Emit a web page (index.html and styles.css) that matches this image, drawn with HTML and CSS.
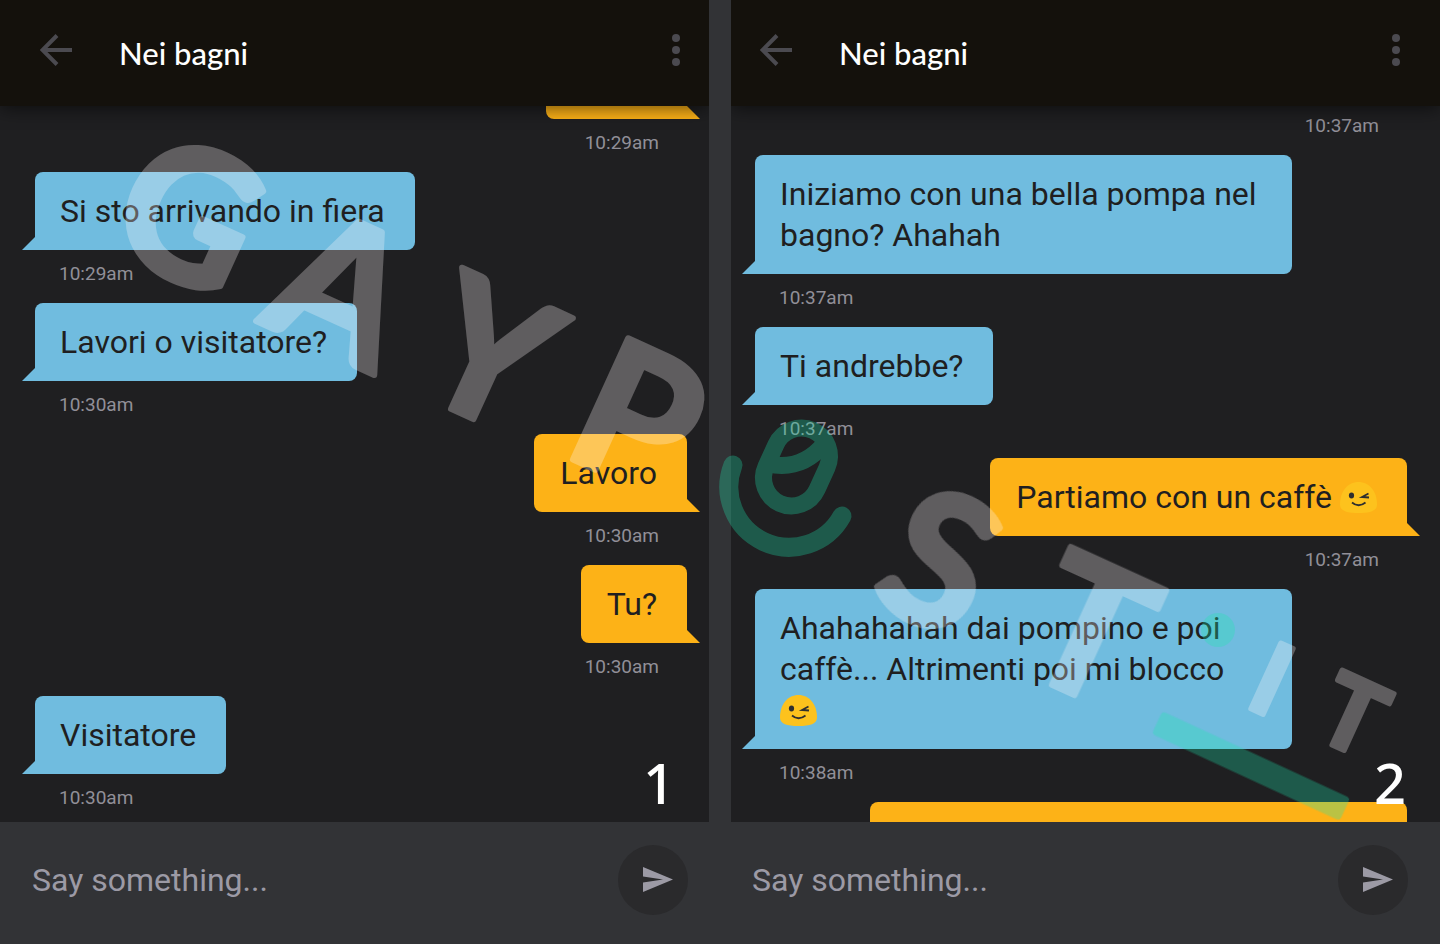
FILE: index.html
```html
<!DOCTYPE html>
<html lang="it">
<head>
<meta charset="utf-8">
<meta name="viewport" content="width=device-width, initial-scale=1">
<title>Nei bagni</title>
<link rel="stylesheet" href="styles.css">
</head>
<body>
<svg class="sprite" aria-hidden="true">
  <symbol id="back" viewBox="0 0 32 38"><path d="M32 16H4M17 1.500L2.500 16L17 30.500" fill="none" stroke="#4b4a50" stroke-width="4"/></symbol>
  <symbol id="more" viewBox="0 0 8 38"><g fill="#4b4a50"><circle cx="4" cy="4" r="4"/><circle cx="4" cy="16" r="4"/><circle cx="4" cy="28" r="4"/></g></symbol>
  <symbol id="send" viewBox="0 0 70 70"><path d="M25 22L55 34.500L25 47V37.500L45 34.500L25 31.500Z" fill="#9c9aa5"/></symbol>
  <symbol id="wink" viewBox="0 0 37 31">
    <path d="M18.500 0C8 0 0 9 0 22.500C0 29 7 31 18.500 31S37 29 37 22.500C37 9 29 0 18.500 0Z" fill="#fdc21d"/>
    <ellipse cx="11.500" cy="13.500" rx="2.600" ry="3" fill="#2f2f2f"/>
    <path d="M28.500 11.500L22 15L29 15.500M12 20.500Q18.500 26 25.500 20.500" fill="none" stroke="#2f2f2f" stroke-width="1.800"/>
  </symbol>
</svg>

<main class="screens">
  <section class="screen screen--first">
    <header class="bar">
      <button class="icon-button" aria-label="Back"><svg width="32" height="38"><use href="#back"/></svg></button>
      <h1 class="title">Nei bagni</h1>
      <button class="icon-button" aria-label="More"><svg width="8" height="38"><use href="#more"/></svg></button>
    </header>
    <ol class="thread">
      <li class="message message--out"><div class="bubble bubble--top-cut"></div><time class="time">10:29am</time></li>
      <li class="message"><p class="bubble">Si sto arrivando in fiera</p><time class="time">10:29am</time></li>
      <li class="message"><p class="bubble">Lavori o visitatore?</p><time class="time">10:30am</time></li>
      <li class="message message--out"><p class="bubble">Lavoro</p><time class="time">10:30am</time></li>
      <li class="message message--out"><p class="bubble">Tu?</p><time class="time">10:30am</time></li>
      <li class="message"><p class="bubble">Visitatore</p><time class="time">10:30am</time></li>
    </ol>
    <form class="composer">
      <input class="field" type="text" aria-label="Message" placeholder="Say something...">
      <button class="send" type="button" aria-label="Send"><svg width="70" height="70"><use href="#send"/></svg></button>
    </form>
    <span class="number">1</span>
  </section>

  <section class="screen screen--second">
    <header class="bar">
      <button class="icon-button" aria-label="Back"><svg width="32" height="38"><use href="#back"/></svg></button>
      <h1 class="title">Nei bagni</h1>
      <button class="icon-button" aria-label="More"><svg width="8" height="38"><use href="#more"/></svg></button>
    </header>
    <ol class="thread thread--scrolled">
      <li class="message message--out"><time class="time">10:37am</time></li>
      <li class="message"><p class="bubble">Iniziamo con una bella pompa nel bagno? Ahahah</p><time class="time">10:37am</time></li>
      <li class="message"><p class="bubble">Ti andrebbe?</p><time class="time">10:37am</time></li>
      <li class="message message--out"><p class="bubble">Partiamo con un caffè <svg class="emoji" role="img" aria-label="wink"><use href="#wink"/></svg></p><time class="time">10:37am</time></li>
      <li class="message"><p class="bubble">Ahahahahah dai pompino e poi caffè... Altrimenti poi mi blocco <svg class="emoji" role="img" aria-label="wink"><use href="#wink"/></svg></p><time class="time">10:38am</time></li>
      <li class="message message--out"><div class="bubble bubble--bottom-cut"></div></li>
    </ol>
    <form class="composer">
      <input class="field" type="text" aria-label="Message" placeholder="Say something...">
      <button class="send" type="button" aria-label="Send"><svg width="70" height="70"><use href="#send"/></svg></button>
    </form>
    <span class="number">2</span>
  </section>
</main>

<svg class="watermark" viewBox="0 0 1440 944" aria-hidden="true">
  <g class="letters">
    <text transform="translate(190 213) rotate(24.500)" y="67">G</text>
    <text transform="translate(343 287) rotate(24.500)" y="67">A</text>
    <text transform="translate(490 353) rotate(24.500)" y="67">Y</text>
    <text transform="translate(639 416) rotate(24.500)" y="67">P</text>
    <text transform="translate(940 560) rotate(24.500)" y="67">S</text>
    <text transform="translate(1091 629) rotate(24.500)" y="67">T</text>
    <g class="letters--small">
      <text transform="translate(1272 679) rotate(24.500)" y="36">I</text>
      <text transform="translate(1353 715) rotate(24.500)" y="36">T</text>
    </g>
  </g>
  <g opacity="0.300">
    <g fill="none" stroke="#1fe7b0" stroke-linecap="round">
      <path d="M733 465A60.300 60.300 0 0 0 842 516" stroke-width="19"/>
      <rect x="768.500" y="427" width="56" height="80" rx="28" transform="rotate(24.500 796.500 467)" stroke-width="17"/>
      <path d="M768 464Q802 471 824 444" stroke-width="17"/>
    </g>
    <g fill="#1fe7b0">
      <circle cx="1218" cy="630" r="17"/>
      <rect x="1147.500" y="753.500" width="207" height="25" rx="4" transform="rotate(24.800 1251 766)"/>
    </g>
  </g>
</svg>
</body>
</html>
```
FILE: styles.css
```css
* {
  box-sizing: border-box;
}

body {
  margin: 0;
  position: relative;
  background: #323336;
  font-family: Roboto, "Liberation Sans", sans-serif;
  font-size: 32px;
  line-height: 41px;
  color: #1f1f21;
}

button {
  border: 0;
  padding: 0;
  background: none;
}

svg {
  display: block;
}

.sprite {
  display: none;
}

.screens {
  display: grid;
  grid-template-columns: 1fr 1fr;
  gap: 22px;
  min-height: 100vh;
}

/* Each screen trims 11px from the side that faces the divider. */
.screen {
  --trim-left: 0px;
  --trim-right: 0px;
  position: relative;
  display: flex;
  flex-direction: column;
  min-width: 0;
}

.screen--first {
  --trim-right: 11px;
}

.screen--second {
  --trim-left: 11px;
}

.bar {
  position: relative;
  z-index: 1;
  display: flex;
  align-items: center;
  height: 106px;
  padding-left: calc(40px - var(--trim-left));
  padding-right: calc(40px - var(--trim-right));
  background: #14110c;
  box-shadow: 0 2px 18px rgba(0, 0, 0, 0.6);
  clip-path: inset(0 0 -24px 0);
}

.title {
  flex: 1;
  margin: 0 0 0 47px;
  font: 500 31px/40px Lato, sans-serif;
  color: #fff;
}

.thread {
  flex: 1 0 716px;
  display: flex;
  flex-direction: column;
  margin: 0;
  padding: 0;
  padding-left: calc(35px - var(--trim-left));
  padding-right: calc(33px - var(--trim-right));
  list-style: none;
  overflow: hidden;
  background: #1f1f21;
  height: 716px;
}

.thread--scrolled {
  margin-top: -4px;
}

.message {
  display: flex;
  flex-direction: column;
  flex-shrink: 0;
  align-items: flex-start;
}

.message--out {
  align-items: flex-end;
}

.bubble {
  position: relative;
  max-width: 537px;
  margin: 0;
  padding: 19px 30px 18px 25px;
  border-radius: 8px 8px 8px 0;
  background: #70bcdf;
}

.bubble::before {
  content: "";
  position: absolute;
  bottom: 0;
  left: -13px;
  width: 13px;
  height: 13px;
  background: #70bcdf;
  clip-path: polygon(100% 0, 100% 100%, 0 100%);
}

.message--out .bubble {
  padding-left: 26px;
  border-radius: 8px 8px 0 8px;
  background: #fdb217;
}

.message--out .bubble::before {
  left: auto;
  right: -13px;
  background: #fdb217;
  clip-path: polygon(0 0, 100% 100%, 0 100%);
}

.message--out .bubble--top-cut {
  width: 141px;
  height: 13px;
  padding: 0;
  border-radius: 0 0 0 8px;
}

.message--out .bubble--bottom-cut {
  width: 100%;
  height: 20px;
  padding: 0;
  border-radius: 8px 8px 0 0;
}

.message--out .bubble--bottom-cut::before {
  display: none;
}

.time {
  padding: 0 28px 6px 24px;
  font-size: 19px;
  line-height: 47px;
  color: #918f98;
}

.emoji {
  display: inline-block;
  width: 37px;
  height: 31px;
  vertical-align: -5px;
}

.composer {
  display: flex;
  align-items: center;
  padding: 23px 32px 29px;
  padding-left: calc(32px - var(--trim-left));
  padding-right: calc(32px - var(--trim-right));
}

.field {
  flex: 1;
  min-width: 0;
  padding: 0;
  border: 0;
  outline: 0;
  background: none;
  font: inherit;
  color: #9c9aa5;
}

.field::placeholder {
  color: #9c9aa5;
  opacity: 1;
}

.send {
  border-radius: 50%;
  background: #2a2a2c;
}

.number {
  position: absolute;
  z-index: 3;
  right: 34px;
  bottom: 130px;
  font: 500 56px/64px "Noto Sans", sans-serif;
  color: #fff;
}

.watermark {
  position: absolute;
  z-index: 2;
  top: 0;
  left: 0;
  width: 100%;
  height: auto;
  pointer-events: none;
}

.letters {
  fill: #fff8fa;
  stroke: #fff8fa;
  stroke-width: 6px;
  stroke-linejoin: round;
  opacity: 0.29;
  font-family: Lato, sans-serif;
  font-weight: 700;
  font-size: 184px;
  text-anchor: middle;
}

.letters--small {
  font-size: 100px;
  stroke-width: 5px;
}
```
